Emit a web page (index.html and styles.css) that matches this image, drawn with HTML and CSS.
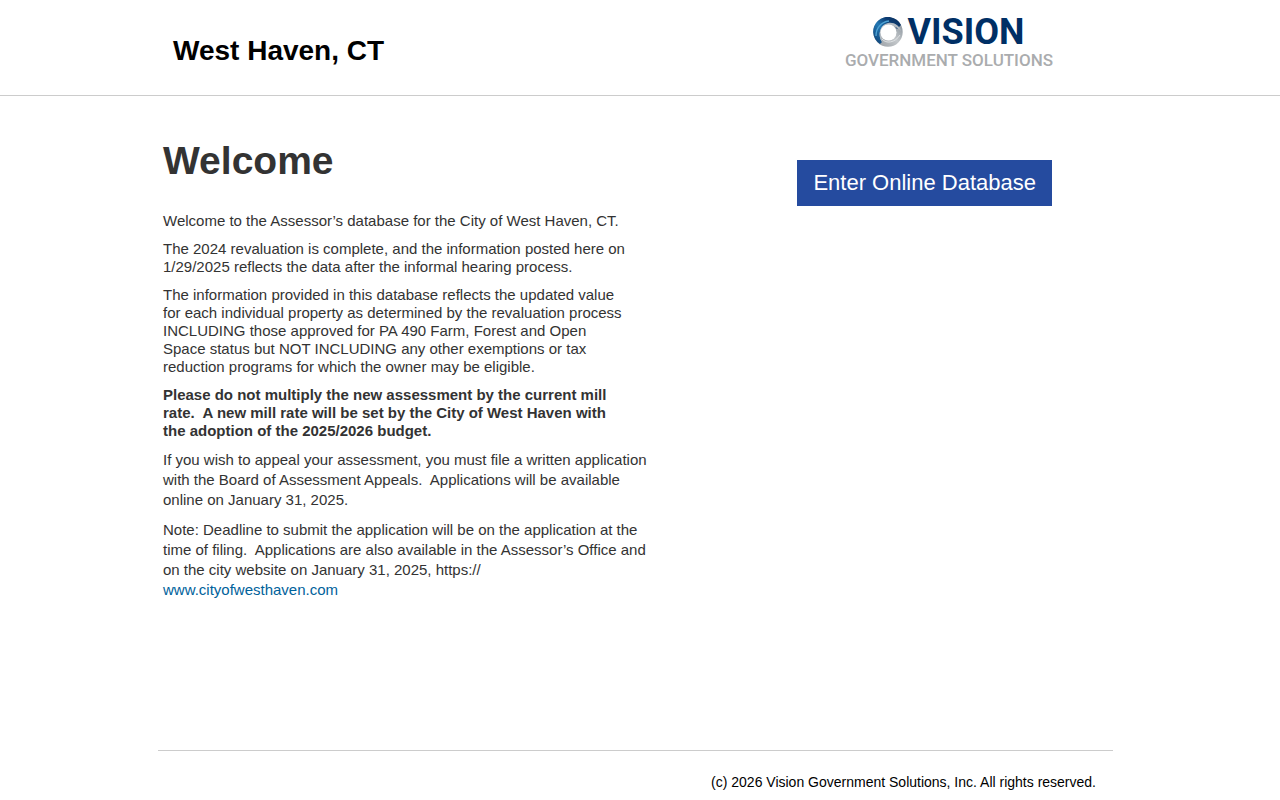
FILE: index.html
```html
<!DOCTYPE html>
<html lang="en">
<head>
    <meta charset="UTF-8">
    <meta name="viewport" content="width=device-width, initial-scale=1.0">
    <title>West Haven, CT</title>
    <link rel="stylesheet" href="styles.css">
</head>
<body>
    <header class="site-header">
        <div class="container header-row">
            <div class="town-name">West Haven, CT</div>
            <div class="logo">
                <div class="logo-top">
                    <svg class="logo-mark" viewBox="0 0 30 30" aria-hidden="true">
                        <defs>
                            <linearGradient id="blue" x1="0" y1="1" x2="1" y2="0">
                                <stop offset="0" stop-color="#0d3b6e"/>
                                <stop offset="0.45" stop-color="#2379b5"/>
                                <stop offset="0.7" stop-color="#0c3c72"/>
                                <stop offset="1" stop-color="#0a2f5e"/>
                            </linearGradient>
                            <linearGradient id="grey" x1="0" y1="1" x2="1" y2="0">
                                <stop offset="0" stop-color="#9ea3a8"/>
                                <stop offset="0.5" stop-color="#c4c8cb"/>
                                <stop offset="1" stop-color="#8b949d"/>
                            </linearGradient>
                        </defs>
                        <circle cx="15" cy="15" r="11.2" fill="none" stroke="url(#grey)" stroke-width="7"/>
                        <path d="M7 27A14.7 14.7 0 1 1 28 8L24 12C20 6 13 5 9 10C6 14 6 20 9 25Z" fill="url(#blue)"/>
                        <path d="M3 19C3 11 8 5 16 4" fill="none" stroke="#4fa3d4" stroke-width="1.4"/>
                        <path d="M9 25C4 18 7 8 15 6C21 5 26 8 28 14C24 10 20 8 15 9C10 11 8 17 9 25Z" fill="#b3bbc2"/>
                        <path d="M9 22C13 27 22 26 27 18" fill="none" stroke="#dfe2e4" stroke-width="1"/>
                        <circle cx="15.5" cy="15.5" r="8" fill="#fff"/>
                    </svg>
                    <span class="logo-name">VISION</span>
                </div>
                <div class="logo-sub">GOVERNMENT SOLUTIONS</div>
            </div>
        </div>
    </header>
    <div class="container">
        <main class="content">
            <div class="welcome">
                <h1>Welcome</h1>
                <div class="intro">
                    <p>Welcome to the Assessor’s database for the City of West Haven, CT.</p>
                    <p>The 2024 revaluation is complete, and the information posted here on 1/29/2025 reflects the data after the informal hearing process.</p>
                    <p>The information provided in this database reflects the updated value for each individual property as determined by the revaluation process INCLUDING those approved for PA 490 Farm, Forest and Open Space status but NOT INCLUDING any other exemptions or tax reduction programs for which the owner may be eligible.</p>
                    <p><strong>Please do not multiply the new assessment by the current mill rate.&nbsp; A new mill rate will be set by the City of West Haven with the adoption of the 2025/2026 budget.</strong></p>
                </div>
                <div class="appeal">
                    <p>If you wish to appeal your assessment, you must file a written application with the Board of Assessment Appeals.&nbsp; Applications will be available online on January 31, 2025.</p>
                    <p>Note: Deadline to submit the application will be on the application at the time of filing.&nbsp; Applications are also available in the Assessor’s Office and on the city website on January 31, 2025, https://<br><a href="#">www.cityofwesthaven.com</a></p>
                </div>
            </div>
            <div class="enter">
                <a class="enter-button" href="#">Enter Online Database</a>
            </div>
        </main>
        <footer class="site-footer">(c) 2026 Vision Government Solutions, Inc. All rights reserved.</footer>
    </div>
</body>
</html>
```

FILE: styles.css
```css
* {
    margin: 0;
    padding: 0;
    box-sizing: border-box;
}

body {
    background-color: #fff;
    color: #333;
    font-family: "Liberation Sans", Arial, sans-serif;
    font-size: 15px;
    line-height: 18px;
}

.container {
    box-sizing: content-box;
    max-width: 955px;
    margin: 0 auto;
    padding-right: 9px;
}

.site-header {
    border-bottom: 1px solid #ccc;
}

.header-row {
    display: flex;
    justify-content: space-between;
    min-height: 95px;
}

.town-name {
    padding: 32px 0 0 15px;
    color: #000;
    font-size: 28px;
    font-weight: bold;
    line-height: 38px;
}

.logo {
    padding-top: 16px;
    margin-right: 60px;
    font-family: Roboto, "Liberation Sans", sans-serif;
    text-align: center;
}

.logo-top {
    display: flex;
    justify-content: center;
    align-items: center;
    gap: 4px;
    height: 32px;
}

.logo-mark {
    width: 30px;
    height: 30px;
}

.logo-name {
    color: #002f65;
    font-size: 36px;
    font-weight: 700;
    line-height: 32px;
}

.logo-sub {
    margin-top: 3px;
    color: #aaacae;
    font-size: 17px;
    font-weight: 500;
    line-height: 18px;
}

.content {
    display: flex;
    justify-content: space-between;
    min-height: 654px;
    padding: 40px 61px 0 5px;
}

.welcome {
    flex: 0 1 486px;
}

h1 {
    margin-bottom: 26px;
    font-size: 39px;
    line-height: 50px;
}

p {
    margin-bottom: 10px;
}

.intro {
    max-width: 466px;
}

.appeal {
    line-height: 20px;
}

a {
    color: #00629b;
    text-decoration: none;
}

.enter {
    padding-top: 24px;
}

.enter-button {
    display: block;
    padding: 8px 16px;
    background-color: #254b9f;
    color: #fff;
    font-size: 22px;
    line-height: 30px;
}

.site-footer {
    padding: 21px 17px 0 0;
    border-top: 1px solid #ccc;
    color: #000;
    font-size: 14px;
    line-height: 20px;
    text-align: right;
}
```
